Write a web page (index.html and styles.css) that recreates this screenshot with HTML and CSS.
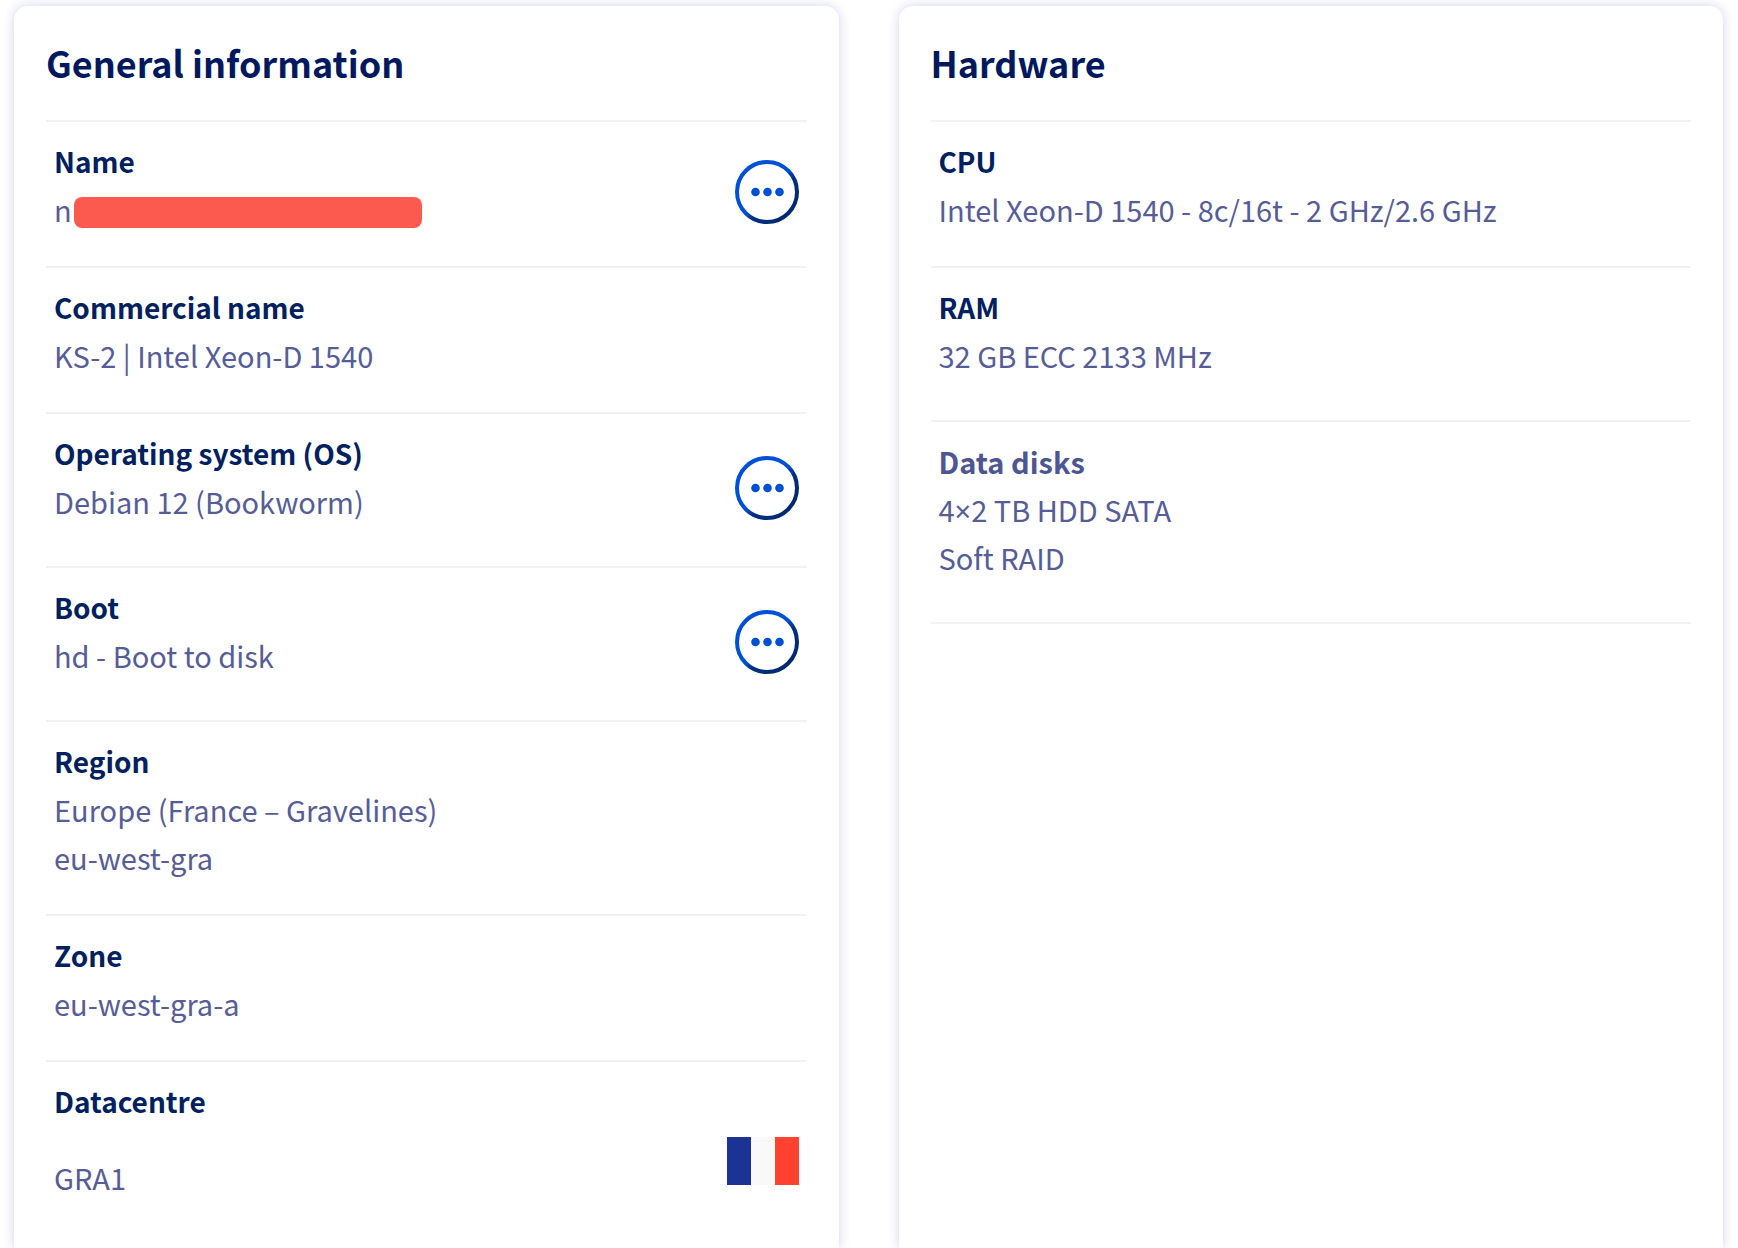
FILE: index.html
```html
<!DOCTYPE html>
<html lang="en">
<head>
<meta charset="utf-8">
<meta name="viewport" content="width=device-width, initial-scale=1">
<title>Server overview</title>
<link rel="stylesheet" href="styles.css">
</head>
<body>
<svg class="defs" width="0" height="0" aria-hidden="true">
  <defs>
    <linearGradient id="ring" x1="0" y1="0" x2="1" y2="1">
      <stop offset="0" stop-color="#0050d7"/>
      <stop offset="0.5" stop-color="#0050d7"/>
      <stop offset="0.6" stop-color="#002f80"/>
      <stop offset="1" stop-color="#00246b"/>
    </linearGradient>
    <symbol id="more" viewBox="0 0 64 64">
      <circle cx="32" cy="32" r="30" fill="none" stroke="url(#ring)" stroke-width="4"/>
      <circle cx="20.500" cy="32" r="4.300" fill="#0050d7"/>
      <circle cx="32.500" cy="32" r="4.300" fill="#0050d7"/>
      <circle cx="44.500" cy="32" r="4.300" fill="#0050d7"/>
    </symbol>
  </defs>
</svg>
<main class="dashboard">
  <section class="card">
    <h2 class="card-title">General information</h2>
    <dl class="list">
      <div class="row">
        <div class="text">
          <dt>Name</dt>
          <dd class="masked">n<span class="mask"></span></dd>
        </div>
        <button class="more" type="button" aria-label="Name actions"><svg><use href="#more"/></svg></button>
      </div>
      <div class="row">
        <div class="text">
          <dt>Commercial name</dt>
          <dd>KS-2 | Intel Xeon-D 1540</dd>
        </div>
      </div>
      <div class="row roomy">
        <div class="text">
          <dt>Operating system (OS)</dt>
          <dd>Debian 12 (Bookworm)</dd>
        </div>
        <button class="more" type="button" aria-label="Operating system actions"><svg><use href="#more"/></svg></button>
      </div>
      <div class="row roomy">
        <div class="text">
          <dt>Boot</dt>
          <dd>hd - Boot to disk</dd>
        </div>
        <button class="more" type="button" aria-label="Boot actions"><svg><use href="#more"/></svg></button>
      </div>
      <div class="row">
        <div class="text">
          <dt>Region</dt>
          <dd>Europe (France – Gravelines)</dd>
          <dd>eu-west-gra</dd>
        </div>
      </div>
      <div class="row">
        <div class="text">
          <dt>Zone</dt>
          <dd>eu-west-gra-a</dd>
        </div>
      </div>
      <div class="row">
        <div class="text spaced">
          <dt>Datacentre</dt>
          <dd>GRA1</dd>
        </div>
        <svg class="flag" viewBox="0 0 72 48" role="img" aria-label="France">
          <path fill="#1a3395" d="M0 0h24v48H0z"/>
          <path fill="#f9f9f9" d="M24 0h24v48H24z"/>
          <path fill="#ff4130" d="M48 0h24v48H48z"/>
        </svg>
      </div>
    </dl>
  </section>
  <section class="card">
    <h2 class="card-title">Hardware</h2>
    <dl class="list closed">
      <div class="row">
        <div class="text">
          <dt>CPU</dt>
          <dd>Intel Xeon-D 1540 - 8c/16t - 2 GHz/2.6 GHz</dd>
        </div>
      </div>
      <div class="row roomy">
        <div class="text">
          <dt>RAM</dt>
          <dd>32 GB ECC 2133 MHz</dd>
        </div>
      </div>
      <div class="row roomy">
        <div class="text">
          <dt class="muted">Data disks</dt>
          <dd>4<span class="times">×</span>2 TB HDD SATA</dd>
          <dd>Soft RAID</dd>
        </div>
      </div>
    </dl>
  </section>
</main>
</body>
</html>
```
FILE: styles.css
```css
* {
  box-sizing: border-box;
}

body {
  margin: 0;
  background: #fff;
  color: #565c98;
  font-family: "Source Sans Pro", "Noto Sans CJK SC", "Noto Sans", sans-serif;
  font-size: 29px;
  line-height: 48px;
}

.defs {
  position: absolute;
}

.dashboard {
  display: grid;
  grid-template-columns: repeat(2, minmax(0, 1fr));
  gap: 60px;
  min-height: 100vh;
  padding: 6px 15px 0 14px;
}

.card {
  padding: 30px 32px 0;
  border-radius: 14px 14px 0 0;
  background: #fff;
  box-shadow: 0 0 12px #0000a02e;
}

.card-title {
  margin: 0 0 32px;
  color: #00185e;
  font-size: 36px;
  font-weight: 700;
  line-height: 52px;
}

.list {
  margin: 0;
}

.closed {
  border-bottom: 2px solid #f2f2f2;
}

.row {
  display: flex;
  align-items: center;
  justify-content: space-between;
  padding: 0 8px 4px;
  border-top: 2px solid #f2f2f2;
}

.text {
  padding: 15px 0 29px;
}

.roomy .text {
  padding-bottom: 37px;
}

.spaced dt {
  margin-bottom: 28px;
}

dt {
  color: #00205f;
  font-size: 28px;
  font-weight: 600;
}

dt.muted {
  color: #4d5592;
  font-size: 29px;
}

dd {
  margin: 0;
}

.times {
  font-family: "Noto Sans", sans-serif;
  line-height: 1;
}

.masked {
  display: flex;
  align-items: flex-end;
  gap: 2px;
}

.mask {
  width: 348px;
  height: 31px;
  margin-bottom: 5px;
  border-radius: 8px;
  background: #fd5a4f;
}

.more {
  width: 64px;
  height: 64px;
  padding: 0;
  border: 0;
  border-radius: 50%;
  background: none;
  cursor: pointer;
}

.more svg {
  display: block;
  width: 64px;
  height: 64px;
}

.flag {
  align-self: flex-end;
  width: 72px;
  height: 48px;
  margin-bottom: 45px;
}
```
